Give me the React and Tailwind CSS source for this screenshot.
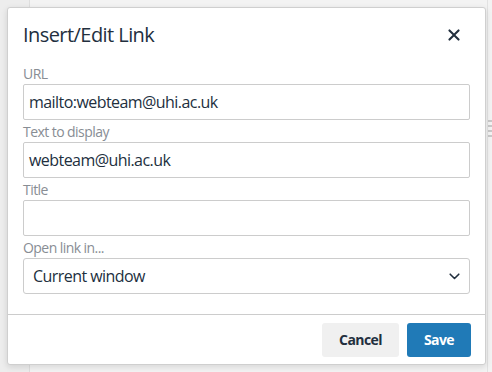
import React from 'react';

const font = { fontFamily: '"Open Sans", "Liberation Sans", sans-serif' };

function CloseIcon() {
  return (
    <svg width="24" height="24" viewBox="0 0 24 24" className="fill-[#222f3e]">
      <path d="M17.3 8.2L13.4 12l3.9 3.8a1 1 0 0 1-1.5 1.5L12 13.4l-3.8 3.9a1 1 0 0 1-1.5-1.5l3.9-3.8-3.9-3.8a1 1 0 0 1 1.5-1.5l3.8 3.9 3.8-3.9a1 1 0 0 1 1.5 1.5z" />
    </svg>
  );
}

function Chevron() {
  return (
    <svg width="11" height="7" viewBox="0 0 11 7" fill="none">
      <polyline points="1.2,1.2 5.5,5.5 9.8,1.2" stroke="#222f3e" strokeWidth="1.6" strokeLinecap="round" strokeLinejoin="round" />
    </svg>
  );
}

function Field({ label, value }) {
  return (
    <div className="flex flex-col">
      <label className="h-[22px] leading-[24px] text-[14px] text-[#888d94]">{label}</label>
      <div className="h-[36px] border border-[#cccccc] rounded-[2px] bg-white flex items-center pl-[5px] text-[16px] text-[#222f3e]">
        {value}
      </div>
    </div>
  );
}

export default function App() {
  return (
    <div className="relative w-[492px] h-[372px] overflow-hidden bg-[#f3f3f3]" style={font}>
      {/* editor behind the dialog */}
      <div className="flex h-full">
        <div className="w-[30px] h-full bg-[#ededed] border-r border-[#dedede]"></div>
        <div className="flex-1 h-full"></div>
        <div className="w-[5px] h-full border-l border-[#e2e2e2] pt-[120px] flex flex-col gap-[3px]">
          <div className="h-[2px] bg-[#c9c9c9]"></div>
          <div className="h-[2px] bg-[#c9c9c9]"></div>
          <div className="h-[2px] bg-[#c9c9c9]"></div>
          <div className="h-[2px] bg-[#c9c9c9]"></div>
        </div>
      </div>

      {/* dialog */}
      <div className="absolute left-[7px] top-[7px] w-[479px] h-[358px] bg-white border border-[#cfcfcf] rounded-[3px] shadow-[0_2px_6px_rgba(0,0,0,0.12)] flex flex-col tracking-[-0.035em]">
        <div className="h-[54px] flex items-center justify-between pl-[15px] pr-[19px]">
          <h1 className="text-[20px] text-[#222f3e] leading-none">Insert/Edit Link</h1>
          <CloseIcon />
        </div>

        <div className="px-[15px] flex flex-col pb-[20px]">
          <Field label="URL" value="mailto:webteam@uhi.ac.uk" />
          <Field label="Text to display" value="webteam@uhi.ac.uk" />
          <Field label="Title" value="" />
          <div className="flex flex-col">
            <label className="h-[22px] leading-[24px] text-[14px] text-[#888d94]">Open link in...</label>
            <div className="h-[36px] border border-[#cccccc] rounded-[3px] bg-white flex items-center justify-between pl-[9px] pr-[9px] text-[16px] text-[#222f3e]">
              <span>Current window</span>
              <Chevron />
            </div>
          </div>
        </div>

        <div className="flex-1 border-t border-[#cccccc] flex items-center justify-end gap-[8px] px-[14px]">
          <button className="w-[77px] h-[34px] rounded-[3px] bg-[#f0f0f0] text-[14px] font-bold text-[#222f3e]">Cancel</button>
          <button className="w-[64px] h-[34px] rounded-[3px] bg-[#207ab7] text-[14px] font-bold text-white">Save</button>
        </div>
      </div>
    </div>
  );
}
